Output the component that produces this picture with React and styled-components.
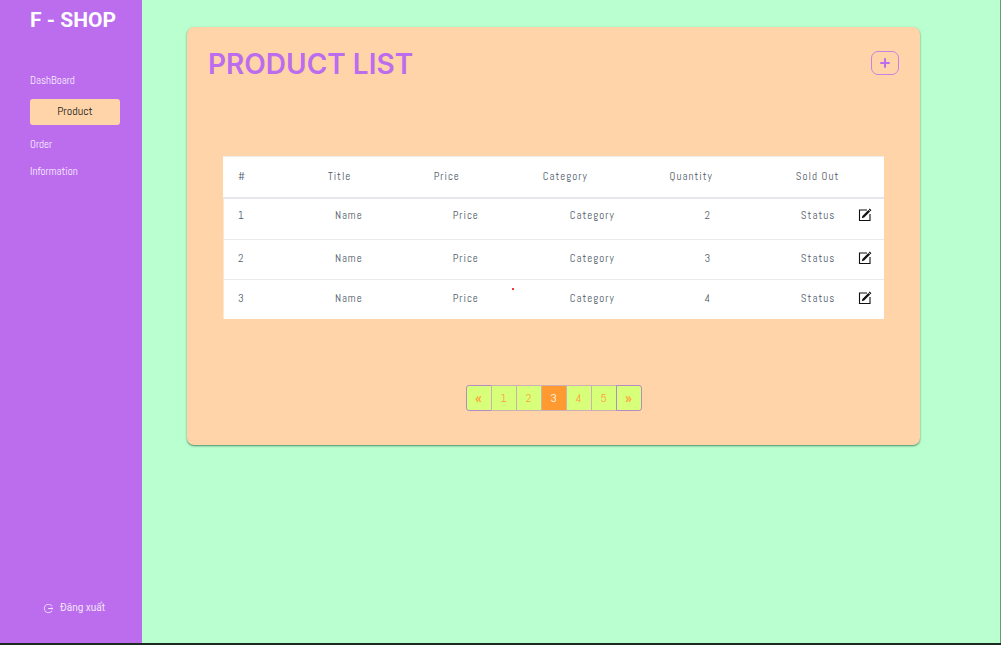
import React from "react";
import styled, { createGlobalStyle } from "styled-components";
import { AiOutlineLogout } from "react-icons/ai";

const narrow = '"Abel", "Roboto Condensed", "Open Sans Condensed", "Noto Sans CJK SC", sans-serif';

const GlobalStyle = createGlobalStyle`
  *, *::before, *::after { box-sizing: border-box; }
  body { margin: 0; background: #b9ffd0; }
  button { font: inherit; cursor: pointer; }
`;

const Page = styled.div`
  display: flex;
  min-height: 100vh;
  border-bottom: 2px solid #1c2a22;
  font-family: ${narrow};
`;

const Sidebar = styled.aside`
  display: flex;
  flex-direction: column;
  flex: 0 0 142px;
  padding: 8px 22px 27px 30px;
  background: #bb6dee;
`;

const Brand = styled.div`
  font: 700 21px/24px "Roboto", sans-serif;
  color: #fff;
  white-space: nowrap;
`;

const Nav = styled.nav`
  display: flex;
  flex-direction: column;
  gap: 11px;
  margin-top: 40px;
`;

const NavLink = styled.a`
  padding: ${(p) => (p.$active ? "4px 0 6px" : "0")};
  border-radius: 3px;
  background: ${(p) => (p.$active ? "#ffd4a8" : "transparent")};
  color: ${(p) => (p.$active ? "#222" : "#f8eefe")};
  font-size: ${(p) => (p.$active ? 12 : 11)}px;
  line-height: 16px;
  text-align: ${(p) => (p.$active ? "center" : "left")};
  text-decoration: none;
`;

const Logout = styled.button`
  display: flex;
  align-items: center;
  justify-content: center;
  gap: 6px;
  margin-top: auto;
  padding: 0 2px 0 0;
  border: 0;
  background: none;
  color: #f3e4fc;
  font: 10px/16px "Roboto", sans-serif;
`;

const Main = styled.main`
  flex: 1;
  min-width: 0;
  padding: 27px 80px 40px 45px;
  border-right: 1px solid #6f9a7e;
  background: #b9ffd0;
`;

const Card = styled.section`
  position: relative;
  padding: 24px 21px 34px;
  border-radius: 7px;
  background: #ffd4a8;
  box-shadow: 0 1px 2px rgba(0, 60, 30, 0.6);
`;

const CardHeader = styled.header`
  display: flex;
  align-items: center;
  justify-content: space-between;
  height: 24px;
`;

const Title = styled.h1`
  margin: 0;
  padding-top: 2px;
  font: 600 28px/32px "Inter", sans-serif;
  color: #bb6dee;
`;

const AddButton = styled.button`
  display: flex;
  align-items: center;
  justify-content: center;
  width: 28px;
  height: 24px;
  padding: 0;
  border: 1px solid #c883e2;
  border-radius: 7px;
  background: transparent;
  color: #bb6dee;
`;

const TableWrap = styled.div`
  margin: 81px 15px 0;
`;

const Table = styled.table`
  width: 100%;
  table-layout: fixed;
  border-spacing: 0;
  color: #4f5a69;
  font-size: 11px;
  line-height: 16px;
  letter-spacing: 1px;
`;

const Column = styled.col`
  width: ${(p) => p.$width}%;
`;

const HeadCell = styled.th`
  height: 43px;
  padding: 0 0 2px 15px;
  border-top: 1px solid #f1ece8;
  border-bottom: 2px solid #e6e7ea;
  background: #fff;
  font-weight: 400;
  text-align: left;
  white-space: nowrap;
`;

const Cell = styled.td`
  height: 40px;
  padding: 0 0 0 ${(p) => p.$indent}px;
  background: #fff;
  white-space: nowrap;

  &:first-child { border-left: 1px solid #ffe6cc; }
  tr:first-child > & { padding-bottom: 8px; }
  tr + tr > & { border-top: 1px solid #e9eaec; padding-bottom: 4px; }
`;

const EditButton = styled.button`
  display: block;
  padding: 0;
  border: 0;
  background: none;
  color: #111;

  svg { display: block; }
`;

const Pagination = styled.nav`
  display: flex;
  justify-content: center;
  margin-top: 66px;
`;

const PageButton = styled.button`
  width: 26px;
  height: 26px;
  padding: 0;
  border: 1px solid ${(p) => (p.$edge ? "#b58bc4" : "#cdb0b4")};
  background: ${(p) => (p.$active ? "#ff9a30" : "#d8ff79")};
  color: ${(p) => (p.$active ? "#fff" : "#ff9f3c")};
  font-family: ${(p) => (p.$edge ? '"Roboto", sans-serif' : narrow)};
  font-size: ${(p) => (p.$edge ? 14 : 12)}px;
  font-weight: ${(p) => (p.$edge ? 700 : 400)};
  line-height: 16px;

  & + & { margin-left: -1px; }
  &:first-child { border-radius: 3px 0 0 3px; }
  &:last-child { border-radius: 0 3px 3px 0; }
`;

const Marker = styled.span`
  position: absolute;
  top: 261px;
  left: 325px;
  width: 2px;
  height: 2px;
  background: #ee3a3a;
`;

const columns = [
  { label: "#", width: 13.6, indent: 14 },
  { label: "Title", width: 16, indent: 22 },
  { label: "Price", width: 16.5, indent: 34 },
  { label: "Category", width: 19.2, indent: 42 },
  { label: "Quantity", width: 19.1, indent: 50 },
  { label: "Sold Out", width: 9.4, indent: 20 },
  { label: "", width: 6.2, indent: 15 },
];

const rows = [
  ["1", "Name", "Price", "Category", "2", "Status"],
  ["2", "Name", "Price", "Category", "3", "Status"],
  ["3", "Name", "Price", "Category", "4", "Status"],
];

const links = ["DashBoard", "Product", "Order", "Information"];
const pages = ["«", "1", "2", "3", "4", "5", "»"];
const pageLabels = { "«": "Previous page", "»": "Next page" };

function EditIcon() {
  return (
    <svg width="14" height="14" viewBox="0 0 14 14" fill="none" aria-hidden="true">
      <path d="M9 2H1.5V12.5H12V6" stroke="currentColor" strokeWidth="1.1" />
      <path d="M3.8 10.2L4.4 7.9L10.4 1.9L12.1 3.6L6.1 9.6Z" fill="currentColor" />
      <path d="M10.8 1.5L11.7 .6L13.4 2.3L12.5 3.2Z" fill="currentColor" />
    </svg>
  );
}

function PlusIcon() {
  return (
    <svg width="10" height="10" viewBox="0 0 10 10" aria-hidden="true">
      <path d="M5 1V9M1 5H9" stroke="currentColor" strokeWidth="2" strokeLinecap="round" />
    </svg>
  );
}

export default function App() {
  return (
    <Page>
      <GlobalStyle />
      <Sidebar>
        <Brand>F - SHOP</Brand>
        <Nav aria-label="Main">
          {links.map((link) => (
            <NavLink key={link} href="#" $active={link === "Product"}>
              {link}
            </NavLink>
          ))}
        </Nav>
        <Logout type="button">
          <AiOutlineLogout size={11} />
          Đăng xuất
        </Logout>
      </Sidebar>
      <Main>
        <Card>
          <CardHeader>
            <Title>PRODUCT LIST</Title>
            <AddButton type="button" aria-label="Add product">
              <PlusIcon />
            </AddButton>
          </CardHeader>
          <TableWrap>
            <Table>
              <colgroup>
                {columns.map((c) => (
                  <Column key={c.label} $width={c.width} />
                ))}
              </colgroup>
              <thead>
                <tr>
                  {columns.map((c) => (
                    <HeadCell key={c.label} scope="col">
                      {c.label}
                    </HeadCell>
                  ))}
                </tr>
              </thead>
              <tbody>
                {rows.map((row) => (
                  <tr key={row[0]}>
                    {row.map((value, i) => (
                      <Cell key={columns[i].label} $indent={columns[i].indent}>
                        {value}
                      </Cell>
                    ))}
                    <Cell $indent={columns[6].indent}>
                      <EditButton type="button" aria-label={`Edit product ${row[0]}`}>
                        <EditIcon />
                      </EditButton>
                    </Cell>
                  </tr>
                ))}
              </tbody>
            </Table>
          </TableWrap>
          <Pagination aria-label="Pages">
            {pages.map((page) => (
              <PageButton
                key={page}
                type="button"
                aria-label={pageLabels[page]}
                aria-current={page === "3" ? "page" : undefined}
                $active={page === "3"}
                $edge={page in pageLabels}
              >
                {page}
              </PageButton>
            ))}
          </Pagination>
          <Marker />
        </Card>
      </Main>
    </Page>
  );
}
